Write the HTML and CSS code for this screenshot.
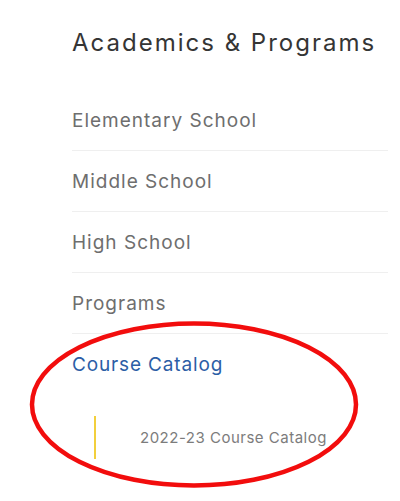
FILE: index.html
```html
<!DOCTYPE html>
<html>
<head>
<meta charset="utf-8">
<link rel="stylesheet" href="styles.css">
</head>
<body>
<nav class="sidenav">
  <h2 class="title">Academics &amp; Programs</h2>
  <ul class="menu">
    <li class="item"><a href="#">Elementary School</a></li>
    <li class="item"><a href="#">Middle School</a></li>
    <li class="item"><a href="#">High School</a></li>
    <li class="item"><a href="#">Programs</a></li>
    <li class="item active"><a href="#">Course Catalog</a>
      <ul class="submenu">
        <li class="subitem"><a href="#">2022-23 Course Catalog</a></li>
      </ul>
    </li>
  </ul>
</nav>
<svg class="annotation" width="400" height="501" viewBox="0 0 400 501">
  <ellipse cx="194" cy="404.5" rx="162" ry="81" fill="none" stroke="#f20d0d" stroke-width="4.5"/>
</svg>
</body>
</html>
```
FILE: styles.css
```css
html, body {
  margin: 0;
  padding: 0;
  background: #ffffff;
}
body {
  position: relative;
  width: 400px;
  height: 501px;
  overflow: hidden;
  font-family: "Inter", "Noto Sans", sans-serif;
}
.sidenav {
  padding: 0 12px 0 72px;
}
.title {
  margin: 0;
  height: 90px;
  box-sizing: border-box;
  padding-top: 28px;
  font-size: 24px;
  line-height: 30px;
  font-weight: 400;
  letter-spacing: 2px;
  color: #353535;
  white-space: nowrap;
}
.menu {
  list-style: none;
  margin: 0;
  padding: 0;
}
.item {
  border-bottom: 1px solid #efefef;
}
.item > a {
  display: block;
  height: 60px;
  box-sizing: border-box;
  padding-top: 19px;
  font-size: 19px;
  line-height: 24px;
  letter-spacing: 1px;
  color: #6e6e6e;
  text-decoration: none;
}
.item.active {
  border-bottom: none;
}
.item.active > a {
  color: #2c5ea6;
  letter-spacing: 0.85px;
}
.submenu {
  list-style: none;
  margin: 22px 0 0 22px;
  padding: 0;
}
.subitem {
  border-left: 2px solid #f2cf3c;
  height: 43px;
  display: flex;
  align-items: center;
  padding-left: 44px;
}
.subitem a {
  font-size: 15px;
  letter-spacing: 0.5px;
  color: #7c7c7c;
  text-decoration: none;
}
.annotation {
  position: absolute;
  left: 0;
  top: 0;
  pointer-events: none;
}
```
